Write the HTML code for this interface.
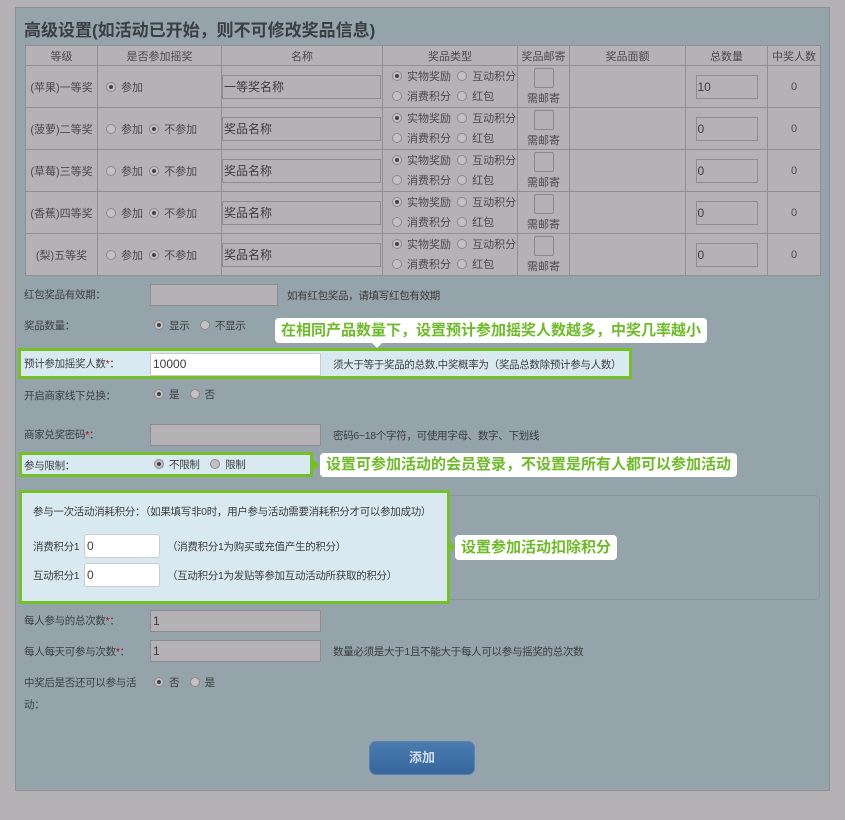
<!DOCTYPE html>
<html><head><meta charset="utf-8"><style>
*{box-sizing:border-box;margin:0;padding:0}
body{width:845px;height:820px;background:#b3b1b4;font-family:"Liberation Sans","Noto Sans CJK SC",sans-serif;color:#3c3c3c;font-size:11px;position:relative;overflow:hidden}
.panel{position:absolute;left:15px;top:7px;width:815px;height:784px;background:#95a3ab;border:1px solid #8a9298}
.title{position:absolute;left:24px;top:16px;font-size:17px;font-weight:bold;color:#3a3f44}
table{position:absolute;left:25px;top:45px;border-collapse:collapse;background:#b5b2b5;table-layout:fixed}
td,th{border:1px solid #918f92;text-align:center;font-weight:normal;font-size:11px;color:#4a4a4a;padding:0}
th{height:20px}
td{height:42px}
.r{display:inline-block;width:10px;height:10px;border-radius:50%;border:1px solid #8c8a8c;background:#c3c1c3;vertical-align:-1px;margin-right:5px;position:relative}
.r.on::after{content:"";position:absolute;left:2px;top:2px;width:4px;height:4px;border-radius:50%;background:#444}
.inp{display:inline-block;border:1px solid #8e8c8e;background:#b5b2b5;height:24px;line-height:22px;text-align:left;font-size:12px;color:#3c3c3c;padding-left:1px;vertical-align:middle}
.chk{display:block;width:20px;height:20px;border:1px solid #8a888a;background:#b3b1b3;border-radius:2px;margin:0 auto 2px}
.a{position:absolute;white-space:nowrap}
.n{font-size:10.5px;letter-spacing:-0.3px}
.lbl{position:absolute;left:24px;font-size:10.5px;color:#3c4044;white-space:nowrap;letter-spacing:-0.3px}
.fi{position:absolute;border:1px solid #8e8c8e;background:#b5b2b5;height:22px;font-size:12px;line-height:20px;padding-left:2px}
.hl{position:absolute;background:#d8e9f1;border:3px solid #74c126}
.co{position:absolute;background:#fff;color:#6dbb28;font-size:15px;font-weight:bold;border-radius:4px;padding:0 6px;line-height:25px;white-space:nowrap}
.star{color:#c00}
</style></head><body>
<div class="panel"></div>
<div class="title">高级设置(如活动已开始，则不可修改奖品信息)</div>
<table>
<colgroup><col style="width:72px"><col style="width:124px"><col style="width:161px"><col style="width:135px"><col style="width:52px"><col style="width:116px"><col style="width:82px"><col style="width:53px"></colgroup>
<tr style="height:20px"><th>等级</th><th>是否参加摇奖</th><th>名称</th><th>奖品类型</th><th>奖品邮寄</th><th>奖品面额</th><th>总数量</th><th>中奖人数</th></tr>
<tr style="height:42px"><td>(苹果)一等奖</td><td style="text-align:left;padding-left:8px"><span class="r on"></span>参加</td><td style="text-align:left"><span class="inp" style="width:159px">一等奖名称</span></td><td style="text-align:left;padding-left:9px;line-height:20px"><span class="r on"></span>实物奖励 &nbsp;<span class="r"></span>互动积分<br><span class="r"></span>消费积分 &nbsp;<span class="r"></span>红包</td><td><span class="chk"></span>需邮寄</td><td></td><td><span class="inp" style="width:62px">10</span></td><td>0</td></tr>
<tr style="height:42px"><td>(菠萝)二等奖</td><td style="text-align:left;padding-left:8px"><span class="r"></span>参加 &nbsp;<span class="r on"></span>不参加</td><td style="text-align:left"><span class="inp" style="width:159px">奖品名称</span></td><td style="text-align:left;padding-left:9px;line-height:20px"><span class="r on"></span>实物奖励 &nbsp;<span class="r"></span>互动积分<br><span class="r"></span>消费积分 &nbsp;<span class="r"></span>红包</td><td><span class="chk"></span>需邮寄</td><td></td><td><span class="inp" style="width:62px">0</span></td><td>0</td></tr>
<tr style="height:42px"><td>(草莓)三等奖</td><td style="text-align:left;padding-left:8px"><span class="r"></span>参加 &nbsp;<span class="r on"></span>不参加</td><td style="text-align:left"><span class="inp" style="width:159px">奖品名称</span></td><td style="text-align:left;padding-left:9px;line-height:20px"><span class="r on"></span>实物奖励 &nbsp;<span class="r"></span>互动积分<br><span class="r"></span>消费积分 &nbsp;<span class="r"></span>红包</td><td><span class="chk"></span>需邮寄</td><td></td><td><span class="inp" style="width:62px">0</span></td><td>0</td></tr>
<tr style="height:42px"><td>(香蕉)四等奖</td><td style="text-align:left;padding-left:8px"><span class="r"></span>参加 &nbsp;<span class="r on"></span>不参加</td><td style="text-align:left"><span class="inp" style="width:159px">奖品名称</span></td><td style="text-align:left;padding-left:9px;line-height:20px"><span class="r on"></span>实物奖励 &nbsp;<span class="r"></span>互动积分<br><span class="r"></span>消费积分 &nbsp;<span class="r"></span>红包</td><td><span class="chk"></span>需邮寄</td><td></td><td><span class="inp" style="width:62px">0</span></td><td>0</td></tr>
<tr style="height:41px"><td>(梨)五等奖</td><td style="text-align:left;padding-left:8px"><span class="r"></span>参加 &nbsp;<span class="r on"></span>不参加</td><td style="text-align:left"><span class="inp" style="width:159px">奖品名称</span></td><td style="text-align:left;padding-left:9px;line-height:20px"><span class="r on"></span>实物奖励 &nbsp;<span class="r"></span>互动积分<br><span class="r"></span>消费积分 &nbsp;<span class="r"></span>红包</td><td><span class="chk"></span>需邮寄</td><td></td><td><span class="inp" style="width:62px">0</span></td><td>0</td></tr>
</table>

<div class="lbl" style="top:287px">红包奖品有效期：</div>
<div class="fi" style="left:150px;top:284px;width:128px"></div>
<div class="a n" style="left:287px;top:288px">如有红包奖品，请填写红包有效期</div>

<div class="lbl" style="top:318px">奖品数量：</div>
<div class="a n" style="left:154px;top:318px"><span class="r on"></span>显示 &nbsp;&nbsp;&nbsp;<span class="r"></span>不显示</div>

<div class="co" style="left:275px;top:318px">在相同产品数量下，设置预计参加摇奖人数越多，中奖几率越小</div>
<div class="a" style="left:371px;top:342px;width:0;height:0;border-left:6px solid transparent;border-right:6px solid transparent;border-top:6px solid #fff"></div>

<div class="hl" style="left:18px;top:348px;width:614px;height:31px"></div>
<div class="lbl" style="top:356px">预计参加摇奖人数<span class="star">*</span>：</div>
<div class="fi" style="left:150px;top:353px;width:171px;height:23px;background:#fff;border-color:#ccc">10000</div>
<div class="a n" style="left:333px;top:357px">须大于等于奖品的总数,中奖概率为（奖品总数除预计参与人数）</div>

<div class="lbl" style="top:388px">开启商家线下兑换：</div>
<div class="a n" style="left:154px;top:387px"><span class="r on"></span>是 &nbsp;&nbsp;&nbsp;<span class="r"></span>否</div>

<div class="lbl" style="top:427px">商家兑奖密码<span class="star">*</span>：</div>
<div class="fi" style="left:150px;top:424px;width:171px"></div>
<div class="a n" style="left:333px;top:428px">密码6~18个字符，可使用字母、数字、下划线</div>

<div class="hl" style="left:19px;top:452px;width:294px;height:25px"></div>
<div class="lbl" style="top:458px">参与限制：</div>
<div class="a n" style="left:154px;top:457px"><span class="r on"></span>不限制 &nbsp;&nbsp;&nbsp;<span class="r"></span>限制</div>
<div class="co" style="left:320px;top:453px;line-height:24px">设置可参加活动的会员登录，不设置是所有人都可以参加活动</div>
<div class="a" style="left:313px;top:459px;width:0;height:0;border-top:6px solid transparent;border-bottom:6px solid transparent;border-left:6px solid #74c126"></div>

<div class="a" style="left:25px;top:495px;width:795px;height:105px;border:1px solid #8a969d;border-radius:5px"></div>
<div class="hl" style="left:19px;top:490px;width:431px;height:114px"></div>
<div class="a n" style="left:33px;top:504px">参与一次活动消耗积分：（如果填写非0时，用户参与活动需要消耗积分才可以参加成功）</div>
<div class="a n" style="left:33px;top:539px">消费积分1</div>
<div class="fi" style="left:84px;top:534px;width:76px;height:24px;line-height:22px;background:#fff;border-color:#ccc;border-radius:3px">0</div>
<div class="a n" style="left:167px;top:539px">（消费积分1为购买或充值产生的积分）</div>
<div class="a n" style="left:33px;top:568px">互动积分1</div>
<div class="fi" style="left:84px;top:563px;width:76px;height:24px;line-height:22px;background:#fff;border-color:#ccc;border-radius:3px">0</div>
<div class="a n" style="left:167px;top:568px">（互动积分1为发贴等参加互动活动所获取的积分）</div>
<div class="co" style="left:455px;top:535px;line-height:25px">设置参加活动扣除积分</div>
<div class="a" style="left:450px;top:542px;width:0;height:0;border-top:5px solid transparent;border-bottom:5px solid transparent;border-left:5px solid #74c126"></div>

<div class="lbl" style="top:613px">每人参与的总次数<span class="star">*</span>：</div>
<div class="fi" style="left:150px;top:610px;width:171px">1</div>
<div class="lbl" style="top:644px">每人每天可参与次数<span class="star">*</span>：</div>
<div class="fi" style="left:150px;top:640px;width:171px">1</div>
<div class="a n" style="left:333px;top:644px">数量必须是大于1且不能大于每人可以参与摇奖的总次数</div>

<div class="lbl" style="top:675px">中奖后是否还可以参与活</div>
<div class="lbl" style="top:697px">动：</div>
<div class="a n" style="left:154px;top:675px"><span class="r on"></span>否 &nbsp;&nbsp;&nbsp;<span class="r"></span>是</div>

<div class="a" style="left:369px;top:741px;width:106px;height:34px;border-radius:7px;background:linear-gradient(#4a7cb0,#35669c);border:1px solid #5a84b0;color:#d5dde6;font-size:13px;font-weight:bold;text-align:center;line-height:32px">添加</div>
</body></html>
